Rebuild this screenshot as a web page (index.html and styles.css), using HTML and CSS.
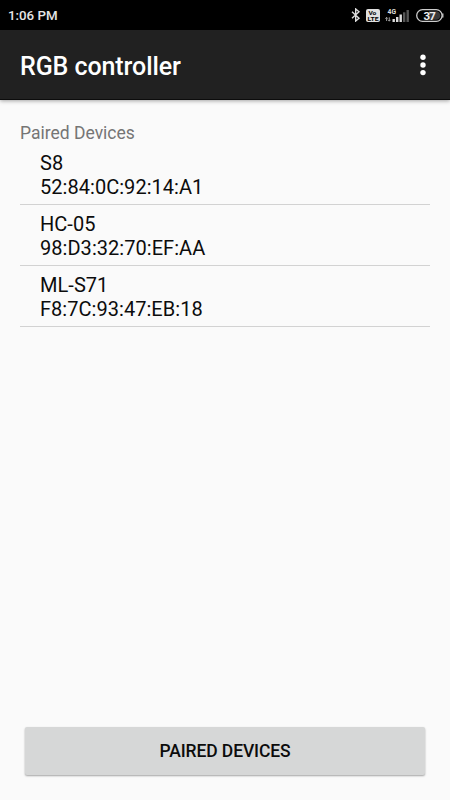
FILE: index.html
```html
<!DOCTYPE html>
<html lang="en">
<head>
    <meta charset="UTF-8">
    <meta name="viewport" content="width=device-width, initial-scale=1.0">
    <title>RGB controller</title>
    <link rel="stylesheet" href="styles.css">
</head>
<body>
    <div class="status-bar">
        <span class="time">1:06 PM</span>
        <div class="status-icons">
            <svg class="bluetooth" width="10" height="14" viewBox="0 0 10 14">
                <path d="M1 3.7 L8 10.2 L4.7 13 V1 L8 3.8 L1 10.3" />
            </svg>
            <svg class="volte" width="14" height="13" viewBox="0 0 14 13">
                <rect width="14" height="13" rx="2" />
                <text x="2.4" y="5.8" textLength="8" lengthAdjust="spacingAndGlyphs">Vo</text>
                <text x="1.6" y="11.9" textLength="11" lengthAdjust="spacingAndGlyphs">LTE</text>
            </svg>
            <svg class="signal" width="25" height="15" viewBox="0 0 25 15">
                <text x="2.5" y="5.6" textLength="8.5" lengthAdjust="spacingAndGlyphs">4G</text>
                <path d="M1.6 9.5 V13 M0.4 10.7 L1.6 9.3 L2.8 10.7 M4.3 9.3 V13 M3.1 11.8 L4.3 13.2 L5.5 11.8" />
                <rect x="7.5" y="11" width="2.4" height="3" />
                <rect x="11" y="9" width="2.4" height="5" />
                <rect x="14.5" y="6.5" width="2.4" height="7.5" />
                <rect class="off" x="18" y="4.3" width="2.4" height="9.7" />
                <rect class="off" x="21.5" y="2" width="2.4" height="12" />
            </svg>
            <svg class="battery" width="28" height="13" viewBox="0 0 28 13">
                <path class="level" d="M13 2.2 H20 A4.3 4.3 0 0 1 20 10.8 H13 Z" />
                <rect class="case" x="0.7" y="0.7" width="25.4" height="11.6" rx="5.8" />
                <path d="M26.8 4.5 V8.5" />
                <text x="7.4" y="10.5" textLength="12.5">37</text>
            </svg>
        </div>
    </div>

    <header class="app-bar">
        <h1>RGB controller</h1>
        <button class="menu-btn" aria-label="More options">
            <svg width="6" height="22" viewBox="0 0 6 22">
                <circle cx="3" cy="3.3" r="2.7" />
                <circle cx="3" cy="11" r="2.7" />
                <circle cx="3" cy="18.6" r="2.7" />
            </svg>
        </button>
    </header>

    <main class="content">
        <h2>Paired Devices</h2>
        <ul class="device-list">
            <li>S8<br>52:84:0C:92:14:A1</li>
            <li>HC-05<br>98:D3:32:70:EF:AA</li>
            <li>ML-S71<br>F8:7C:93:47:EB:18</li>
        </ul>
        <button class="btn">PAIRED DEVICES</button>
    </main>
</body>
</html>
```

FILE: styles.css
```css
* {
    box-sizing: border-box;
}
body {
    margin: 0;
    height: 100vh;
    display: flex;
    flex-direction: column;
    overflow: hidden;
    font-family: Roboto, sans-serif;
    background: #fafafa;
    color: #0c0c0c;
}
.status-bar {
    flex: none;
    height: 30px;
    padding: 0 6px 0 8px;
    display: flex;
    align-items: center;
    justify-content: space-between;
    background: #000;
    color: #e6e6e6;
}
.time {
    font-size: 13.3px;
    font-weight: 500;
}
.status-icons {
    display: flex;
    align-items: center;
}
.status-icons text {
    font-weight: 700;
}
.bluetooth {
    margin-right: 5px;
    fill: none;
    stroke: #ddd;
    stroke-width: 1.4;
}
.volte {
    margin-right: 5px;
    fill: #e0e0e0;
}
.volte text {
    font-size: 5.8px;
    fill: #000;
}
.signal {
    margin-right: 6px;
    fill: #ddd;
}
.signal text {
    font-size: 6.8px;
}
.signal path {
    fill: none;
    stroke: #aaa;
    stroke-width: 0.9;
}
.signal .off {
    fill: #555;
}
.battery {
    fill: #eee;
}
.battery .case,
.battery path {
    fill: none;
    stroke: #ccc;
    stroke-width: 1.3;
}
.battery .level {
    fill: #3a3a3a;
    stroke: none;
}
.battery text {
    font-size: 11.5px;
}
.app-bar {
    flex: none;
    height: 70px;
    padding: 0 13px 0 20px;
    display: flex;
    align-items: center;
    justify-content: space-between;
    background: #212121;
    border-bottom: 1px solid #0c0c0c;
    box-shadow: 0 1px 4px rgba(0, 0, 0, 0.35);
    color: white;
}
.app-bar h1 {
    margin: 3px 0 0;
    font-size: 25px;
    font-weight: 500;
    letter-spacing: -0.08px;
}
.menu-btn {
    width: 28px;
    height: 40px;
    padding: 0;
    display: flex;
    align-items: center;
    justify-content: center;
    background: transparent;
    border: none;
}
.menu-btn svg {
    fill: white;
}
.content {
    flex: 1;
    padding: 20px 20px 25px;
    display: flex;
    flex-direction: column;
}
.content h2 {
    margin: 2px 0 5px;
    font-size: 17.5px;
    line-height: 23px;
    font-weight: 400;
    color: #757575;
}
.device-list {
    flex: 1;
    margin: 0;
    padding: 0;
    list-style: none;
}
.device-list li {
    height: 61px;
    padding: 7px 20px 0;
    border-bottom: 1px solid #d2d2d2;
    font-size: 20px;
    line-height: 24px;
    letter-spacing: 0.04px;
}
.device-list li:first-child {
    height: 55px;
    padding-top: 1px;
}
.btn {
    height: 48px;
    margin: 0 5px;
    padding: 0;
    background: #d6d7d7;
    border: none;
    border-radius: 2px;
    box-shadow: 0 1px 2px rgba(0, 0, 0, 0.35);
    font-family: inherit;
    font-size: 17.5px;
    font-weight: 500;
    letter-spacing: -0.1px;
    color: #0c0c0c;
}
```
